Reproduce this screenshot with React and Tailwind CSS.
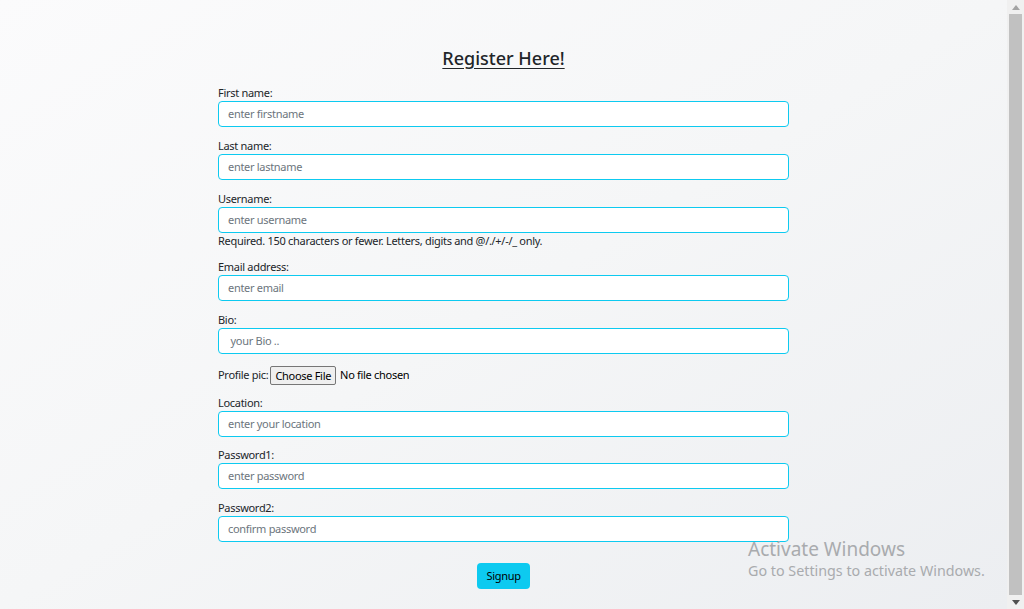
export default function App() {
  const fields = [
    { label: "First name:", ph: "enter firstname" },
    { label: "Last name:", ph: "enter lastname" },
    { label: "Username:", ph: "enter username", help: "Required. 150 characters or fewer. Letters, digits and @/./+/-/_ only." },
    { label: "Email address:", ph: "enter email" },
    { label: "Bio:", ph: " your Bio .." },
  ];
  const after = [
    { label: "Location:", ph: "enter your location", mb: "mb-[10px]" },
    { label: "Password1:", ph: "enter password" },
    { label: "Password2:", ph: "confirm password" },
  ];

  const Field = ({ label, ph, help, mb = "mb-[11px]" }) => (
    <div className={mb}>
      <label className="block h-4 leading-4 text-[11px] text-[#212529]">{label}</label>
      <input
        placeholder={ph}
        className="block w-full h-[26px] px-[9px] pb-[1px] rounded-[4px] border border-[#0dcaf0] bg-white text-[11px] tracking-[-0.3px] outline-none placeholder:text-[#6c757d]"
      />
      {help && <div className="h-4 leading-4 text-[11px] text-[#212529] -mb-[1px]">{help}</div>}
    </div>
  );

  return (
    <div className="flex h-[609px] w-[1024px] overflow-hidden font-['Noto_Sans',sans-serif]">
      <div className="relative flex-1 bg-gradient-to-br from-[#fbfbfc] via-[#f5f6f7] to-[#eceef1] tracking-[-0.3px]">
        <div className="mx-auto w-[571px] pt-[46px]">
          <h1 className="mb-[15px] text-center text-[18px] font-medium leading-6 tracking-normal text-[#212529] underline underline-offset-[3px]">
            Register Here!
          </h1>
          {fields.map((f) => (
            <Field key={f.label} {...f} />
          ))}
          <div className="mb-[10px] flex h-[20px] items-center text-[11px] text-[#212529]">
            <span>Profile pic:</span>
            <span className="ml-[2px] rounded-[2px] border border-[#767676] bg-[#efefef] px-[4px] leading-[17px] text-black">
              Choose File
            </span>
            <span className="ml-[4px] text-black">No file chosen</span>
          </div>
          {after.map((f) => (
            <Field key={f.label} {...f} />
          ))}
          <div className="mt-[21px] flex justify-center">
            <button className="h-[26px] rounded-[4px] bg-[#0dcaf0] px-[9px] text-[11px] text-black">Signup</button>
          </div>
        </div>
        <div className="pointer-events-none absolute left-[748px] top-[537px] tracking-normal text-[#a9abae]">
          <div className="text-[19px] leading-6">Activate Windows</div>
          <div className="text-[14.3px] leading-5">Go to Settings to activate Windows.</div>
        </div>
      </div>
      <div className="flex w-[17px] flex-col items-center bg-[#f0f0f0]">
        <div className="flex h-[14px] items-center justify-center">
          <svg width="8" height="5" viewBox="0 0 8 5"><path d="M4 0L8 5H0Z" fill="#a3a3a3" /></svg>
        </div>
        <div className="w-[13px] flex-1 bg-[#c1c1c1]" />
        <div className="flex h-[14px] items-center justify-center">
          <svg width="8" height="5" viewBox="0 0 8 5"><path d="M0 0H8L4 5Z" fill="#505050" /></svg>
        </div>
      </div>
    </div>
  );
}
